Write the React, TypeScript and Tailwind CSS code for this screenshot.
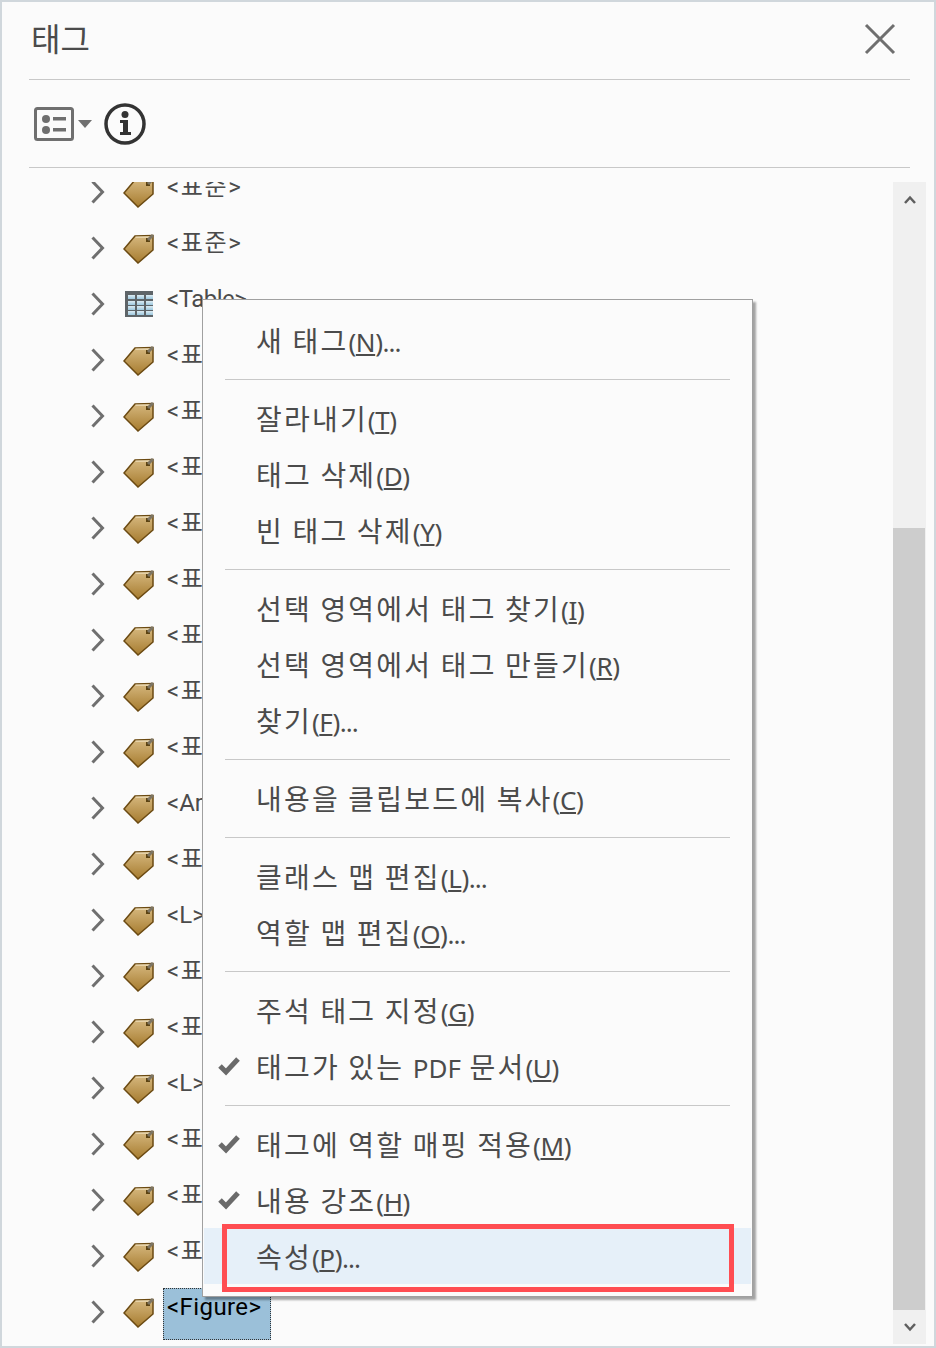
import type { ReactNode } from "react";

const FONT = "font-['Noto_Sans','Noto_Sans_CJK_KR',sans-serif]";

type Row = { label: string; icon?: "tag" | "table"; selected?: boolean; spacing?: string };

const HANGUL = "tracking-[1.6px]";

const rows: Row[] = [
  { label: "<표준>", spacing: HANGUL },
  { label: "<표준>", spacing: HANGUL },
  { label: "<Table>", icon: "table", spacing: "tracking-[-0.5px]" },
  { label: "<표준>", spacing: HANGUL },
  { label: "<표준>", spacing: HANGUL },
  { label: "<표준>", spacing: HANGUL },
  { label: "<표준>", spacing: HANGUL },
  { label: "<표준>", spacing: HANGUL },
  { label: "<표준>", spacing: HANGUL },
  { label: "<표준>", spacing: HANGUL },
  { label: "<표준>", spacing: HANGUL },
  { label: "<Art>" },
  { label: "<표준>", spacing: HANGUL },
  { label: "<L>" },
  { label: "<표준>", spacing: HANGUL },
  { label: "<표준>", spacing: HANGUL },
  { label: "<L>" },
  { label: "<표준>", spacing: HANGUL },
  { label: "<표준>", spacing: HANGUL },
  { label: "<표준>", spacing: HANGUL },
  { label: "<Figure>", selected: true, spacing: "tracking-[0.4px]" },
];

function Chevron() {
  return (
    <svg width="14" height="24" viewBox="0 0 14 24" fill="none" className="block">
      <path d="M1.5 1.5 L11.5 12 L1.5 22.5" stroke="#6f6f6f" strokeWidth="3" />
    </svg>
  );
}

function TagIcon() {
  return (
    <svg width="33" height="32" viewBox="0 0 33 32" className="block">
      <defs>
        <linearGradient id="tagFill" x1="0" y1="0" x2="0" y2="1">
          <stop offset="0" stopColor="#d6b87f" />
          <stop offset="1" stopColor="#a67b2e" />
        </linearGradient>
      </defs>
      <path d="M1 17 L12 4 L30 3.5 L30 18 L15 31 Z" fill="url(#tagFill)" stroke="#6b4a12" strokeWidth="1.5" />
      <path d="M12.5 5.2 L28.5 5" stroke="#ecdcb8" strokeWidth="1.3" />
      <rect x="23" y="6" width="4" height="4" fill="#5c4312" />
      <path d="M25 8 L30 3" stroke="#7d7563" strokeWidth="3" />
    </svg>
  );
}

function TableIcon() {
  return (
    <svg width="28" height="26" viewBox="0 0 28 26" className="block">
      <defs>
        <linearGradient id="cellFill" x1="0" y1="0" x2="0" y2="1">
          <stop offset="0" stopColor="#dcebf2" />
          <stop offset="1" stopColor="#9cc8df" />
        </linearGradient>
      </defs>
      <rect width="28" height="26" fill="#5e6468" />
      {[3, 12, 21].map((x) =>
        [4, 10, 15, 20].map((y) => <rect key={`${x}-${y}`} x={x} y={y} width="7" height="4" fill="url(#cellFill)" />)
      )}
    </svg>
  );
}

function TreeRow({ row }: { row: Row }) {
  return (
    <div className="flex h-14 items-center">
      <div className="ml-[89px] w-[32px] shrink-0">
        <Chevron />
      </div>
      <div className="flex w-[42px] shrink-0">
        {row.icon === "table" ? (
          <div className="pl-[2px]">
            <TableIcon />
          </div>
        ) : (
          <TagIcon />
        )}
      </div>
      <div
        className={`-ml-[2px] mt-[4px] h-[52px] pl-[3px] pr-[9px] pt-[2px] font-['Roboto','Noto_Sans_CJK_KR',sans-serif] text-[24px] leading-[32px] ${row.spacing ?? ""} ${
          row.selected ? "border border-dotted border-[#333] bg-[#9bc0d9] text-black" : "border border-transparent text-[#4b4b4b]"
        }`}
      >
        {row.label}
      </div>
    </div>
  );
}

function Sep() {
  return (
    <div className="flex h-[22px] items-center px-[21px]">
      <div className="h-px w-full bg-[#c8c8c8]" />
    </div>
  );
}

function Item({
  text,
  mn,
  dots,
  checked,
  active,
}: {
  text: ReactNode;
  mn: string;
  dots?: boolean;
  checked?: boolean;
  active?: boolean;
}) {
  return (
    <div className={`relative flex h-14 items-center pl-[52px] pt-[2px] ${active ? "bg-[#e6f0f9]" : ""}`}>
      {checked && (
        <svg width="24" height="20" viewBox="0 0 24 20" className="absolute left-[13px] top-[18px]">
          <path d="M3 10 L9 16 L21 3" fill="none" stroke="#6a6a6a" strokeWidth="5" />
        </svg>
      )}
      <span className="text-[28px] leading-[36px] tracking-[2.2px] text-[#4b4b4b] whitespace-pre [word-spacing:-1px]">
        {text}
        <span className="text-[26px] tracking-[-0.4px]">
          (<u className="underline-offset-2">{mn}</u>)
          {dots ? <span className="tracking-[-1px]">...</span> : ""}
        </span>
      </span>
    </div>
  );
}

export default function App() {
  return (
    <div className={`relative flex h-[1348px] w-[936px] flex-col overflow-hidden border-2 border-[#d0d7dc] bg-[#fbfbfb] ${FONT}`}>
      <div className="ml-[27px] mr-[24px] flex h-[78px] shrink-0 items-center justify-between border-b border-[#c8c8c8] pb-[6px] pl-[2px] pr-[14px]">
        <span className="mt-[3px] text-[32px] leading-none text-[#4b4b4b]">태그</span>
        <svg width="32" height="32" viewBox="0 0 32 32" fill="none" className="mt-[2px]">
          <path d="M2 2 L30 30 M30 2 L2 30" stroke="#6f6f6f" strokeWidth="3" />
        </svg>
      </div>

      <div className="ml-[27px] mr-[24px] flex h-[88px] shrink-0 items-center border-b border-[#c8c8c8] pl-[5px]">
        <svg width="40" height="34" viewBox="0 0 40 34" className="mt-[1px]">
          <rect x="1.5" y="1.5" width="37" height="31" rx="2" fill="none" stroke="#6f6f6f" strokeWidth="3" />
          <circle cx="12" cy="12" r="4" fill="#6f6f6f" />
          <circle cx="12" cy="23" r="4" fill="#6f6f6f" />
          <rect x="19" y="10" width="13" height="3.5" fill="#6f6f6f" />
          <rect x="19" y="21" width="13" height="3.5" fill="#6f6f6f" />
        </svg>
        <svg width="14" height="8" viewBox="0 0 14 8" className="ml-[4px] mt-[1px]">
          <path d="M0 0 H14 L7 8 Z" fill="#6f6f6f" />
        </svg>
        <svg width="42" height="42" viewBox="0 0 42 42" className="ml-[12px] mt-[1px]">
          <circle cx="21" cy="21" r="19" fill="none" stroke="#333" strokeWidth="3.5" />
          <circle cx="21" cy="11.5" r="3.5" fill="#333" />
          <path d="M16 17 H24 V29 H27 V32 H16 V29 H19 V20 H16 Z" fill="#333" />
        </svg>
      </div>

      <div className="mt-[14px] flex min-h-0 flex-1 pb-[2px] pr-[8px]">
        <div className="min-w-0 flex-1 overflow-hidden">
          <div className="-mt-[18px]">
            {rows.map((row, i) => (
              <TreeRow key={i} row={row} />
            ))}
          </div>
        </div>
        <div className="flex w-[33px] shrink-0 flex-col bg-[#f0f0f0]">
          <div className="flex h-[346px] items-start justify-center pt-[13px]">
            <svg width="12" height="9" viewBox="0 0 12 9">
              <path d="M1 8 L6 2.5 L11 8" fill="none" stroke="#5f5f5f" strokeWidth="2.5" />
            </svg>
          </div>
          <div className="mr-px h-[782px] bg-[#cdcdcd]" />
          <div className="flex flex-1 items-center justify-center">
            <svg width="12" height="9" viewBox="0 0 12 9">
              <path d="M1 1 L6 6.5 L11 1" fill="none" stroke="#5f5f5f" strokeWidth="2.5" />
            </svg>
          </div>
        </div>
      </div>

      <div className="absolute left-[200px] top-[297px] w-[551px] border border-[#a0a0a0] bg-[#fbfbfb] py-[12px] pl-px pr-px shadow-[3px_3px_2px_rgba(0,0,0,0.35)]">
        <Item text="새 태그" mn="N" dots />
        <Sep />
        <Item text="잘라내기" mn="T" />
        <Item text="태그 삭제" mn="D" />
        <Item text="빈 태그 삭제" mn="Y" />
        <Sep />
        <Item text="선택 영역에서 태그 찾기" mn="I" />
        <Item text="선택 영역에서 태그 만들기" mn="R" />
        <Item text="찾기" mn="F" dots />
        <Sep />
        <Item text="내용을 클립보드에 복사" mn="C" />
        <Sep />
        <Item text="클래스 맵 편집" mn="L" dots />
        <Item text="역할 맵 편집" mn="O" dots />
        <Sep />
        <Item text="주석 태그 지정" mn="G" />
        <Item
          text={
            <>
              태그가 있는 <span className="text-[26px] tracking-normal">PDF</span> 문서
            </>
          }
          mn="U"
          checked
        />
        <Sep />
        <Item text="태그에 역할 매핑 적용" mn="M" checked />
        <Item text="내용 강조" mn="H" checked />
        <Item text="속성" mn="P" dots active />
        <div className="absolute left-[19px] top-[924px] h-[68px] w-[512px] border-[5px] border-[#ff4d52]" />
      </div>
    </div>
  );
}
